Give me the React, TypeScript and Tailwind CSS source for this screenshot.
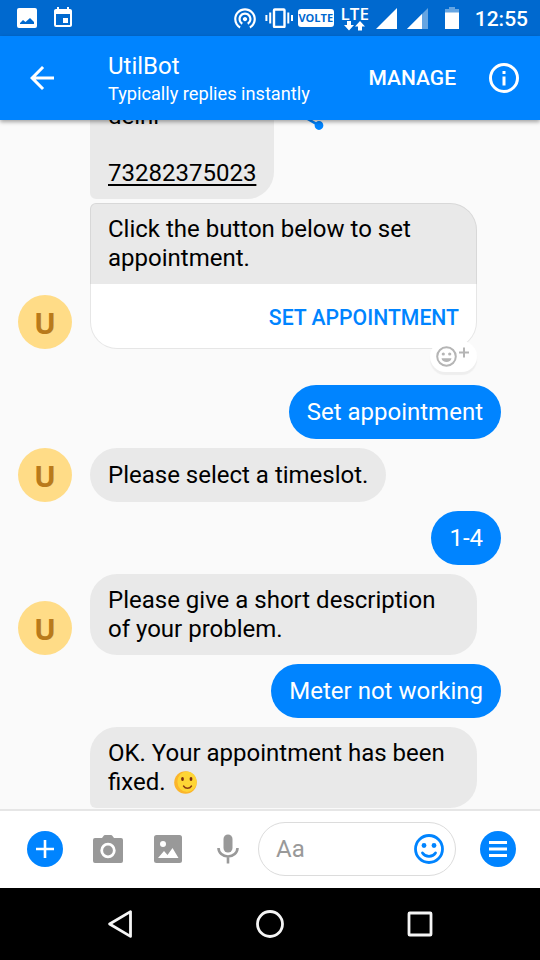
import type { ReactNode } from "react"
import { clsx } from "clsx"
import { MdArrowBack, MdEvent, MdShare, MdWifiTethering } from "react-icons/md"

function StatusBar() {
  return (
    <div className="flex h-9 shrink-0 items-center bg-[#0069cf] text-white">
      <svg className="ml-[17px] size-5" viewBox="0 0 20 20" fill="currentColor">
        <path
          fillRule="evenodd"
          d="M2 0h16a2 2 0 0 1 2 2v16a2 2 0 0 1-2 2H2a2 2 0 0 1-2-2V2a2 2 0 0 1 2-2zM3 16h14v-2l-4-4-4.500 4L6 12l-3 3z"
        />
      </svg>
      <MdEvent className="ml-[14px] size-6" />

      <div className="ml-auto flex h-9 items-center">
        <MdWifiTethering className="size-[26px]" />
        <svg className="ml-[7px] h-5 w-7" viewBox="0 0 28 20" fill="none" stroke="currentColor" strokeWidth="2">
          <rect x="9" y="1.500" width="10.500" height="17.500" rx="0.800" strokeWidth="2.400" />
          <path d="M5.200 4.500v11M1.400 7v6M23.300 4.500v11M27 7v6" />
        </svg>
        <span className="ml-[5px] flex h-[18px] w-[36px] items-center justify-center rounded-[3px] bg-white font-['Open_Sans',sans-serif] text-[11px] font-bold text-[#0069cf]">
          VOLTE
        </span>
        <div className="ml-[7px] mt-[2px] flex w-[28px] flex-col items-center">
          <span className="h-[13px] font-['Open_Sans',sans-serif] text-[17px] leading-[13px] font-semibold">LTE</span>
          <svg className="mt-px h-[10px] w-[21px]" viewBox="0 0 21 10" fill="currentColor">
            <path d="M3 0h4v4h3L5 9.500 0 4h3zM14 9.500h4V5.500h3L16 0l-5 5.500h3z" />
          </svg>
        </div>
        <svg className="ml-[7px] mt-px size-[21px]" viewBox="0 0 21 21" fill="currentColor">
          <path d="M21 0v21H0z" />
        </svg>
        <svg className="ml-[10px] mt-px size-[21px]" viewBox="0 0 21 21" fill="currentColor">
          <path d="M21 0v21H0z" opacity="0.4" />
          <path d="M15 6v15H0z" />
        </svg>
        <svg className="ml-[17px] h-[22px] w-[14px]" viewBox="0 0 14 22" fill="currentColor">
          <path d="M4 0h6v2h4v4H0V2h4z" opacity="0.4" />
          <path d="M0 5.500h14V22H0z" />
        </svg>
        <span className="ml-[16px] mr-[12px] mt-[2px] text-[21px] leading-6 font-medium">12:55</span>
      </div>
    </div>
  )
}

function Header() {
  return (
    <header className="relative z-10 flex h-[84px] shrink-0 items-center bg-[#0084ff] text-white shadow-[0_2px_4px_rgba(0,0,0,0.35)]">
      <MdArrowBack className="ml-6 size-9" />
      <div className="mt-[2px] ml-12">
        <h1 className="text-[24px] leading-[30px]">UtilBot</h1>
        <p className="text-[18.200px] leading-[26px]">Typically replies instantly</p>
      </div>
      <span className="mt-px ml-auto text-[21px] font-medium">MANAGE</span>
      <svg className="ml-[32px] mr-5 size-8" viewBox="0 0 32 32" fill="none" stroke="currentColor" strokeWidth="3">
        <circle cx="16" cy="16" r="13.500" />
        <path d="M16 14.500V23.500M16 9v3" />
      </svg>
    </header>
  )
}

function Avatar() {
  return (
    <div className="ml-[18px] mr-[18px] flex size-[54px] shrink-0 items-center justify-center self-end rounded-full bg-[#ffdc87] font-['Open_Sans',sans-serif] text-[29px] leading-none font-bold text-[#b97a1b]">
      U
    </div>
  )
}

interface BotRowProps {
  children: ReactNode
  avatar?: boolean
  className?: string
}

function BotRow({ children, avatar, className }: BotRowProps) {
  return (
    <div className={clsx("flex shrink-0", className)}>
      {avatar ? <Avatar /> : <div className="w-[90px] shrink-0" />}
      {children}
    </div>
  )
}

function BotBubble({ children, className }: { children: ReactNode; className?: string }) {
  return (
    <div
      className={clsx(
        "flex min-h-[54px] max-w-[387px] items-center bg-[#e9e9e9] px-[18px] text-black",
        className ?? "rounded-[27px]",
      )}
    >
      <p>{children}</p>
    </div>
  )
}

function UserBubble({ children }: { children: ReactNode }) {
  return (
    <div className="mt-[9px] mr-[39px] flex h-[54px] shrink-0 items-center self-end rounded-[27px] bg-[#0084ff] px-[18px] pt-px text-white">
      {children}
    </div>
  )
}

function ReactionButton() {
  return (
    <div className="absolute right-0 -bottom-[23px] flex h-[31px] w-[47px] rounded-full bg-white pt-[5px] pl-[6px] shadow-[0_3px_1px_#eeeeee]">
      <svg className="h-[22px] w-[34px]" viewBox="0 0 34 22" fill="none" stroke="#b5b5b5" strokeWidth="2">
        <circle cx="10.500" cy="10.500" r="9.300" />
        <path d="M28 1.500v10M23 6.500h10" />
        <circle cx="7.300" cy="8" r="1.600" fill="#b5b5b5" stroke="none" />
        <circle cx="13.700" cy="8" r="1.600" fill="#b5b5b5" stroke="none" />
        <path d="M5.500 12.200h10c-.5 5-9.500 5-10 0z" fill="#b5b5b5" stroke="none" />
      </svg>
    </div>
  )
}

function SmileEmoji() {
  return (
    <svg className="ml-[2px] inline-block size-[23px] align-[-4px]" viewBox="0 0 23 23">
      <circle cx="11.500" cy="11.500" r="11.300" fill="#fbb52b" />
      <ellipse cx="13" cy="10.800" rx="9.600" ry="10.200" fill="#fed535" />
      <ellipse cx="8.500" cy="8" rx="1.400" ry="2" fill="#7a2d12" />
      <ellipse cx="17" cy="8" rx="1.400" ry="2" fill="#7a2d12" />
      <path d="M9.500 15c2 3 6 3 8 0" fill="none" stroke="#8a3b12" strokeWidth="1.400" strokeLinecap="round" />
    </svg>
  )
}

function Chat() {
  return (
    <main className="flex min-h-0 flex-1 flex-col justify-end overflow-hidden pb-px text-[24px] leading-[28.5px]">
      <BotRow>
        <BotBubble className="rounded-tl-[27px] rounded-tr-[27px] rounded-br-[27px] rounded-bl-[6px] py-3">
          delhi
          <br />
          <br />
          <span className="underline decoration-[1.5px] underline-offset-[3px]">73282375023</span>
        </BotBubble>
        <MdShare className="mt-[7px] ml-[18px] size-9 text-[#0084ff]" />
      </BotRow>

      <BotRow avatar className="mt-1">
        <div className="relative flex h-[146px] w-[387px] flex-col">
          <p className="h-[81px] rounded-tl-[6px] rounded-tr-[27px] border border-b-0 border-[#d8d8d8] bg-[#e9e9e9] px-[17px] pt-[11px] text-black">
            Click the button below to set appointment.
          </p>
          <div className="flex flex-1 items-center justify-end rounded-b-[27px] border border-t-0 border-[#e6e6e6] bg-white pt-[5px] pr-[17px] text-[21.200px] font-medium text-[#0084ff]">
            SET APPOINTMENT
          </div>
          <ReactionButton />
        </div>
      </BotRow>

      <div className="h-[27px] shrink-0" />
      <UserBubble>Set appointment</UserBubble>
      <BotRow avatar className="mt-[9px]">
        <BotBubble className="rounded-[27px] pt-px">Please select a timeslot.</BotBubble>
      </BotRow>
      <UserBubble>1-4</UserBubble>
      <BotRow avatar className="mt-[9px]">
        <BotBubble className="rounded-[27px] py-3">Please give a short description of your problem.</BotBubble>
      </BotRow>
      <UserBubble>Meter not working</UserBubble>
      <BotRow className="mt-[9px]">
        <BotBubble className="rounded-t-[27px] rounded-br-[27px] rounded-bl-[6px] py-3">
          OK. Your appointment has been fixed. <SmileEmoji />
        </BotBubble>
      </BotRow>
    </main>
  )
}

function Composer() {
  return (
    <footer className="flex h-[79px] shrink-0 items-center border-t-2 border-[#e6e6e6] bg-white pb-[2px] text-[#999999]">
      <svg className="ml-[27px] size-9" viewBox="0 0 36 36">
        <circle cx="18" cy="18" r="18" fill="#0084ff" />
        <path d="M18 9v18M9 18h18" stroke="#fff" strokeWidth="2.600" />
      </svg>
      <svg className="ml-[30px] h-7 w-[30px]" viewBox="0 0 30 28">
        <path
          d="M2 3h7l1.500-2c.5-.7 1-1 2-1h5c1 0 1.500.3 2 1L21 3h7a2 2 0 0 1 2 2v21a2 2 0 0 1-2 2H2a2 2 0 0 1-2-2V5a2 2 0 0 1 2-2z"
          fill="currentColor"
        />
        <circle cx="15" cy="15.500" r="6.300" fill="none" stroke="#fff" strokeWidth="2.800" />
      </svg>
      <svg className="ml-[31px] size-7" viewBox="0 0 28 28">
        <rect width="28" height="28" rx="2.500" fill="currentColor" />
        <circle cx="9" cy="9" r="3" fill="#fff" />
        <path d="M4 23l6-7 3.500 4 5-7L24.500 23z" fill="#fff" />
      </svg>
      <svg className="ml-[35px] h-[30px] w-[22px]" viewBox="0 0 22 30">
        <rect x="6.500" y="0.500" width="9" height="18" rx="4.500" fill="currentColor" />
        <path d="M1.500 14a9.500 8.500 0 0 0 19 0M11 23v6.500" fill="none" stroke="currentColor" strokeWidth="2.600" />
      </svg>
      <div className="ml-[19px] flex h-[54px] w-[198px] items-center justify-between rounded-full border border-[#dcdcdc] pr-[11px] pl-[17px]">
        <span className="pt-px text-[24px]">Aa</span>
        <svg className="size-[30px]" viewBox="0 0 30 30" fill="none" stroke="#0084ff" strokeWidth="2.800">
          <circle cx="15" cy="15" r="13.500" />
          <path d="M8.500 19c3 4.500 10 4.500 13 0" strokeLinecap="round" />
          <circle cx="10" cy="11.500" r="2.400" fill="#0084ff" stroke="none" />
          <circle cx="20" cy="11.500" r="2.400" fill="#0084ff" stroke="none" />
        </svg>
      </div>
      <svg className="ml-6 size-9" viewBox="0 0 36 36">
        <circle cx="18" cy="18" r="18" fill="#0084ff" />
        <path d="M9 11.500h18M9 18h18M9 24.500h18" stroke="#fff" strokeWidth="2.800" />
      </svg>
    </footer>
  )
}

function NavBar() {
  return (
    <nav className="flex h-[72px] shrink-0 items-center justify-between bg-black pr-[106px] pl-[106px] text-[#f5f5f5]">
      <svg className="size-7" viewBox="0 0 28 28" fill="none" stroke="currentColor" strokeWidth="2.800">
        <path d="M24.500 1.600v24.800L3.600 14z" strokeLinejoin="round" />
      </svg>
      <svg className="size-7" viewBox="0 0 28 28" fill="none" stroke="currentColor" strokeWidth="2.800">
        <circle cx="14" cy="14" r="12.500" />
      </svg>
      <svg className="size-7" viewBox="0 0 28 28" fill="none" stroke="currentColor" strokeWidth="2.800">
        <rect x="3" y="3" width="22" height="22" rx="0.800" />
      </svg>
    </nav>
  )
}

export default function App() {
  return (
    <div className="flex h-[960px] w-[540px] flex-col overflow-hidden bg-[#fafafa] font-[Roboto,sans-serif]">
      <StatusBar />
      <Header />
      <Chat />
      <Composer />
      <NavBar />
    </div>
  )
}
